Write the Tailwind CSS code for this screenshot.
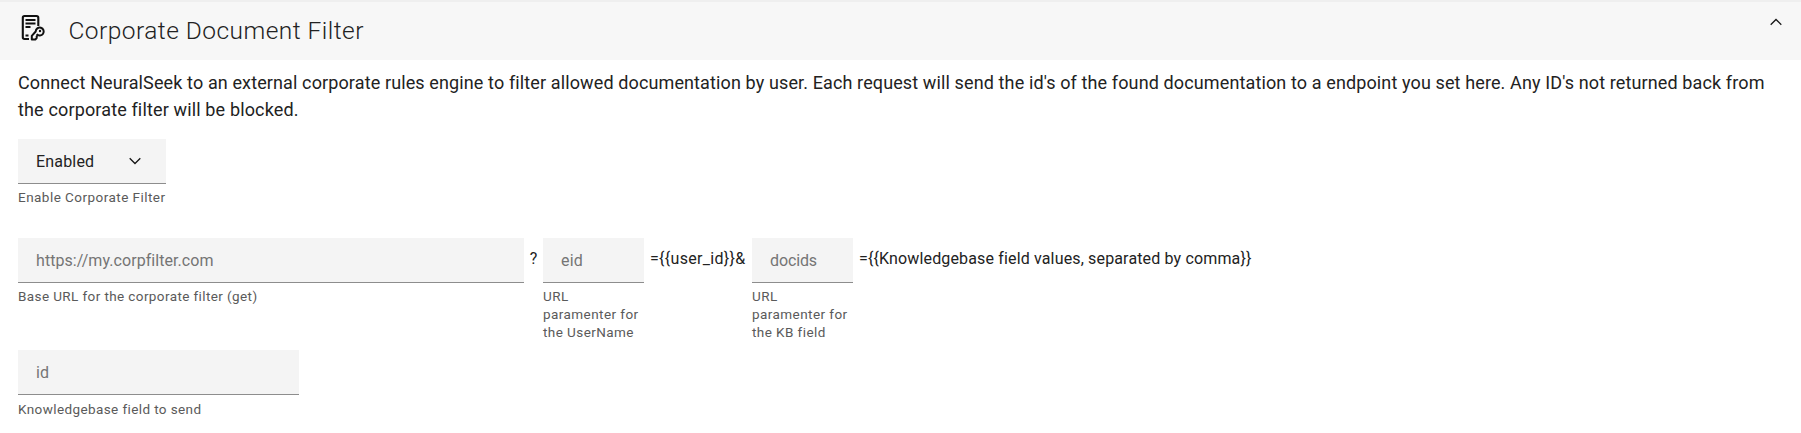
<!DOCTYPE html>
<html lang="en">
<head>
<meta charset="utf-8">
<title>Corporate Document Filter</title>
<script src="https://cdn.jsdelivr.net/npm/@tailwindcss/browser@4"></script>
</head>
<body class="bg-white font-['Roboto',sans-serif] text-[#222222]">
<main class="h-[433px] overflow-hidden">
  <header class="flex h-[60px] items-center border-t-2 border-[#efefef] bg-[#f7f7f7] pl-[18px] pr-[18px]">
    <svg class="-mt-1 h-[30px] w-[30px] shrink-0" viewBox="0 0 30 30" fill="none" stroke="#111111" stroke-width="2.100">
      <path d="M11 25H6.500Q4.800 25 4.800 23.300V3.800Q4.800 2 6.500 2H18.500Q20.300 2 20.300 3.800V12"/>
      <path d="M7.500 6H17.500M7.500 9.500H17.500M7.500 13H12.500M7.500 21.500H10.500" stroke-width="1.800"/>
      <path d="M18.700 20.200A4 4 0 1 0 17.700 17.500L13.800 21.900V25.500H17.300L18.700 24V22.300L20.200 20.600" stroke-width="2" stroke-linejoin="round"/>
      <circle cx="22" cy="17" r="1.200" fill="#111111" stroke="none"/>
    </svg>
    <h1 class="ml-[20.500px] text-[24.5px] font-light tracking-[0.460px]">Corporate Document Filter</h1>
    <svg class="-mt-[18px] ml-auto h-[14px] w-[14px]" viewBox="0 0 14 14" fill="none" stroke="#161616" stroke-width="1.300"><path d="M1.700 9.700 7 4.500 12.300 9.700"/></svg>
  </header>
  <section class="px-[18px] pt-[9px]">
    <p class="text-[18px] leading-[27px]"><span class="block whitespace-nowrap tracking-[0.121px]">Connect NeuralSeek to an external corporate rules engine to filter allowed documentation by user. Each request will send the id's of the found documentation to a endpoint you set here. Any ID's not returned back from</span><span class="block tracking-[0.147px]">the corporate filter will be blocked.</span></p>

    <div class="mt-4 w-[148px]">
      <button class="flex h-[45px] w-full items-center justify-between border-b border-[#8d8d8d] bg-[#f4f4f4] pl-[18px] pr-6 text-base tracking-[0.18px]"><span class="pt-[2px]">Enabled</span>
        <svg class="h-[14px] w-[14px]" viewBox="0 0 14 14" fill="none" stroke="#161616" stroke-width="1.300"><path d="M1.700 4.300 7 9.500 12.300 4.300"/></svg>
      </button>
      <p class="mt-1 whitespace-nowrap text-[13.5px] leading-[18px] tracking-[0.459px] text-[#5a5a5a]">Enable Corporate Filter</p>
    </div>

    <div class="mt-8 flex items-start text-base">
      <div class="w-[506px]">
        <input class="block h-[45px] w-full border-b border-[#8d8d8d] bg-[#f4f4f4] px-[18px] tracking-[0.063px] placeholder:text-[#757575]" placeholder="https://my.corpfilter.com">
        <p class="mt-1 text-[13.5px] leading-[18px] tracking-[0.396px] text-[#5a5a5a]">Base URL for the corporate filter (get)</p>
      </div>
      <span class="w-[19px] text-center leading-[41px]">?</span>
      <div class="w-[101px]">
        <input class="block h-[45px] w-full border-b border-[#8d8d8d] bg-[#f4f4f4] px-[18px] tracking-[0.198px] placeholder:text-[#757575]" placeholder="eid">
        <p class="mt-1 text-[13.5px] leading-[18px] tracking-[0.43px] text-[#5a5a5a]">URL<br>paramenter for<br>the UserName</p>
      </div>
      <span class="w-[108px] whitespace-nowrap pl-[6px] leading-[41px] tracking-[0.306px]">={{user_id}}&amp;</span>
      <div class="w-[101px]">
        <input class="block h-[45px] w-full border-b border-[#8d8d8d] bg-[#f4f4f4] px-[18px] tracking-[-0.117px] placeholder:text-[#757575]" placeholder="docids">
        <p class="mt-1 text-[13.5px] leading-[18px] tracking-[0.43px] text-[#5a5a5a]">URL<br>paramenter for<br>the KB field</p>
      </div>
      <span class="whitespace-nowrap pl-[6px] leading-[41px] tracking-[0.15px]">={{Knowledgebase field values, separated by comma}}</span>
    </div>

    <div class="mt-[9px] w-[281px]">
      <input class="block h-[45px] w-full border-b border-[#8d8d8d] bg-[#f4f4f4] px-[18px] text-base tracking-[0.1px] placeholder:text-[#757575]" placeholder="id">
      <p class="mt-[5px] text-[13.5px] leading-[18px] tracking-[0.399px] text-[#5a5a5a]">Knowledgebase field to send</p>
    </div>
  </section>
</main>
</body>
</html>
